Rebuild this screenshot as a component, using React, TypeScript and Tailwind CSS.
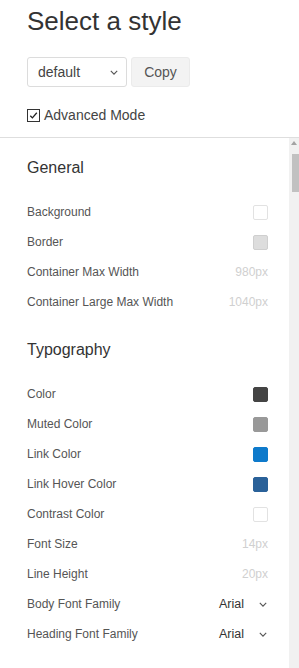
import React from 'react';

type Row =
    | { label: string; kind: 'swatch'; color: string; border: string }
    | { label: string; kind: 'value'; value: string }
    | { label: string; kind: 'font'; value: string };

const general: Row[] = [
    { label: 'Background', kind: 'swatch', color: '#ffffff', border: '#e2e2e2' },
    { label: 'Border', kind: 'swatch', color: '#dddddd', border: '#cfcfcf' },
    { label: 'Container Max Width', kind: 'value', value: '980px' },
    { label: 'Container Large Max Width', kind: 'value', value: '1040px' },
];

const typography: Row[] = [
    { label: 'Color', kind: 'swatch', color: '#444444', border: '#444444' },
    { label: 'Muted Color', kind: 'swatch', color: '#999999', border: '#999999' },
    { label: 'Link Color', kind: 'swatch', color: '#0e7acb', border: '#0e7acb' },
    { label: 'Link Hover Color', kind: 'swatch', color: '#2a6199', border: '#2a6199' },
    { label: 'Contrast Color', kind: 'swatch', color: '#ffffff', border: '#e2e2e2' },
    { label: 'Font Size', kind: 'value', value: '14px' },
    { label: 'Line Height', kind: 'value', value: '20px' },
    { label: 'Body Font Family', kind: 'font', value: 'Arial' },
    { label: 'Heading Font Family', kind: 'font', value: 'Arial' },
];

function Chevron({ className }: { className?: string }) {
    return (
        <svg viewBox="0 0 10 6" className={className} fill="none" stroke="currentColor" strokeWidth="1.4">
            <path d="M1 1l4 4 4-4" />
        </svg>
    );
}

function SettingRow({ row }: { row: Row }) {
    return (
        <div className="flex h-[30px] items-center justify-between">
            <span className="text-[12px] text-[#555]">{row.label}</span>
            {row.kind === 'swatch' && (
                <span
                    className="h-[15px] w-[15px] rounded-[2px] border"
                    style={{ backgroundColor: row.color, borderColor: row.border }}
                />
            )}
            {row.kind === 'value' && <span className="text-[12px] text-[#d0d0d0]">{row.value}</span>}
            {row.kind === 'font' && (
                <span className="flex items-center text-[12.5px] text-[#333]">
                    {row.value}
                    <Chevron className="ml-[15px] mr-[1px] h-[5px] w-[8px] text-[#555]" />
                </span>
            )}
        </div>
    );
}

function Section({ title, rows }: { title: string; rows: Row[] }) {
    return (
        <div>
            <h2 className="text-[16px] leading-[20px] text-[#333]">{title}</h2>
            <div className="mt-[19px]">
                {rows.map((r) => (
                    <SettingRow key={r.label} row={r} />
                ))}
            </div>
        </div>
    );
}

export default function App() {
    return (
        <div className="h-[668px] w-[299px] overflow-hidden bg-white font-['Liberation_Sans',Arial,sans-serif]">
            {/* header */}
            <div className="h-[138px] border-b border-[#dedede] pl-[27px] pt-[6px]">
                <h1 className="text-[26px] leading-[30px] text-[#333]">Select a style</h1>
                <div className="mt-[21px] flex gap-[4px]">
                    <div className="flex h-[30px] w-[100px] items-center justify-between rounded-[3px] border border-[#dcdcdc] pl-[10px] pr-[8px] text-[14px] text-[#444]">
                        default
                        <Chevron className="h-[5px] w-[8px] text-[#555]" />
                    </div>
                    <button className="h-[30px] w-[59px] rounded-[3px] border border-[#ebebeb] bg-[#f3f3f3] text-[14px] text-[#555]">
                        Copy
                    </button>
                </div>
                <label className="mt-[18px] flex items-center gap-[4px] text-[14px] text-[#444]">
                    <span className="flex h-[13px] w-[13px] items-center justify-center border border-[#333] bg-white">
                        <svg viewBox="0 0 12 12" className="h-[11px] w-[11px]" fill="none" stroke="#222" strokeWidth="1.4">
                            <path d="M2.5 6.2l2.3 2.4 4.8-5.6" />
                        </svg>
                    </span>
                    Advanced Mode
                </label>
            </div>

            {/* body */}
            <div className="flex h-[530px]">
                <div className="flex-1 pl-[27px] pr-[21px] pt-[20px]">
                    <Section title="General" rows={general} />
                    <div className="mt-[23px]">
                        <Section title="Typography" rows={typography} />
                    </div>
                </div>
                <div className="flex w-[10px] flex-col bg-[#f1f1f1]">
                    <div className="flex h-[16px] items-start justify-end pr-[2px] pt-[3px]">
                        <span className="h-0 w-0 border-x-[3px] border-b-[4px] border-x-transparent border-b-[#a3a3a3]" />
                    </div>
                    <div className="ml-[3px] h-[38px] bg-[#c1c1c1]" />
                </div>
            </div>
        </div>
    );
}
